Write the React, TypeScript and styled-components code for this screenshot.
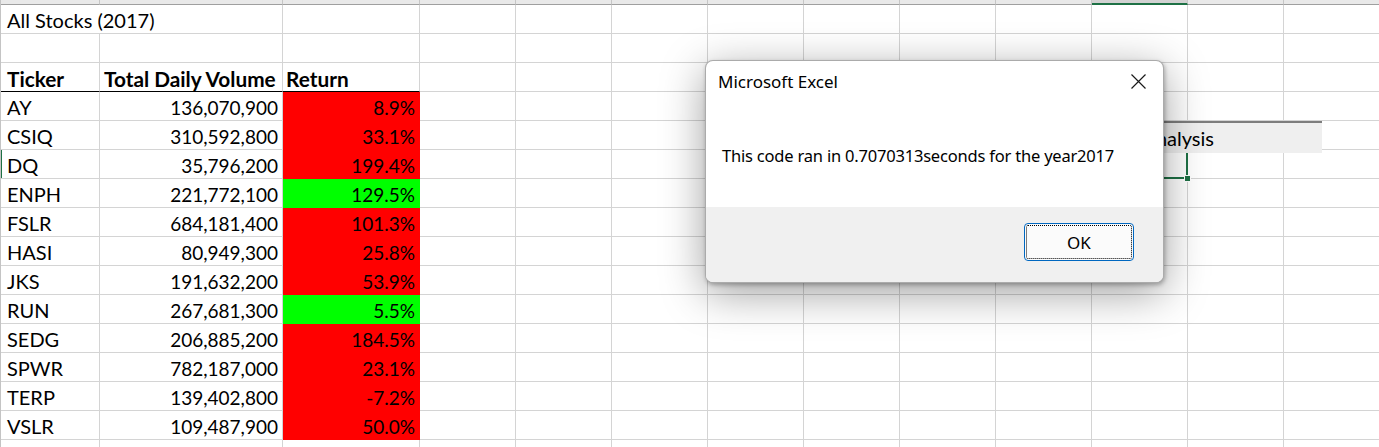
import React from 'react';
import styled, { createGlobalStyle, css } from 'styled-components';

const GlobalStyle = createGlobalStyle`
  html, body { margin: 0; padding: 0; background: #fff; overflow: hidden; }
  #root { width: 1379px; height: 447px; }
  *, *::before, *::after { box-sizing: border-box; }
`;

const COLS = '99px 183px 137px repeat(10, 96px)';
const GRID = '#d4d4d4';
const GREEN_SEL = '#1e7145';

type Fill = 'red' | 'green';
const FILLS: Record<Fill, string> = { red: '#ff0000', green: '#00ff00' };

const Screen = styled.div`
  position: relative;
  width: 1379px;
  height: 447px;
  overflow: hidden;
  background: #fff;
  font-family: Lato, 'Liberation Sans', sans-serif;
  color: #000;
`;

const Sheet = styled.div`
  display: flex;
  flex-direction: column;
  width: max-content;
  border-left: 1px solid #c4c4c4;
`;

const HeaderStrip = styled.div`
  display: grid;
  grid-template-columns: ${COLS};
  height: 5px;
`;

const ColHead = styled.div<{ $active?: boolean }>`
  background: #e9e9e9;
  border-right: 1px solid #c6c6c6;
  border-bottom: 1px solid #9f9f9f;
  ${(p) =>
    p.$active &&
    css`
      background: #d2d2d2;
      border-bottom: 2px solid ${GREEN_SEL};
    `}
`;

const Row = styled.div`
  display: grid;
  grid-template-columns: ${COLS};
  height: 29px;
`;

const Cell = styled.div<{
  $fill?: Fill;
  $right?: boolean;
  $bold?: boolean;
  $span?: number;
  $edge?: boolean;
  $selected?: boolean;
  $marked?: boolean;
}>`
  position: relative;
  height: 29px;
  display: flex;
  align-items: flex-end;
  justify-content: ${(p) => (p.$right ? 'flex-end' : 'flex-start')};
  padding: 0 4px 1px ${(p) => (p.$right ? '4px' : '6px')};
  font-size: ${(p) => (p.$right ? '19px' : p.$bold ? '20.8px' : '20px')};
  line-height: 23px;
  font-weight: ${(p) => (p.$bold ? 700 : 400)};
  white-space: nowrap;
  background: ${(p) => (p.$fill ? FILLS[p.$fill] : '#fff')};
  border-right: 1px solid ${(p) => (p.$fill ? FILLS[p.$fill] : GRID)};
  border-bottom: 1px solid
    ${(p) => (p.$edge ? '#000' : p.$fill ? FILLS[p.$fill] : GRID)};
  ${(p) => p.$span && css`grid-column: span ${p.$span};`}
  ${(p) => p.$marked && css`box-shadow: inset 1px 0 0 ${GREEN_SEL};`}
  ${(p) =>
    p.$selected &&
    css`
      &::after {
        content: '';
        position: absolute;
        top: -2px;
        left: -2px;
        right: -1px;
        bottom: -1px;
        border: 2px solid ${GREEN_SEL};
        pointer-events: none;
      }
      &::before {
        content: '';
        position: absolute;
        right: -4px;
        bottom: -4px;
        width: 7px;
        height: 7px;
        background: ${GREEN_SEL};
        border: 1px solid #fff;
        z-index: 1;
      }
    `}
`;

const ShapeButton = styled.div`
  position: absolute;
  left: 1000px;
  top: 121px;
  width: 322px;
  height: 32px;
  border-top: 2px solid #7d7d7d;
  background: #efefef;
  display: flex;
  justify-content: flex-end;
  align-items: flex-start;
  padding: 4px 108px 0 0;
  font-size: 20px;
  line-height: 23px;
  white-space: nowrap;
  overflow: hidden;
  z-index: 1;
`;

const Dialog = styled.div`
  position: absolute;
  left: 705px;
  top: 60px;
  width: 459px;
  height: 223px;
  border: 1px solid rgba(0, 0, 0, 0.33);
  border-radius: 8px;
  background: #fff;
  overflow: hidden;
  display: flex;
  flex-direction: column;
  box-shadow: 1px 2px 4px rgba(0, 0, 0, 0.28), 0 10px 44px rgba(0, 0, 0, 0.38);
  font-family: 'Noto Sans', 'Open Sans', sans-serif;
  color: #000;
  z-index: 2;
`;

const TitleBar = styled.div`
  height: 40px;
  flex: none;
  display: flex;
  justify-content: space-between;
  align-items: flex-start;
  padding: 9px 17px 0 12px;
`;

const Title = styled.div`
  font-size: 17px;
  line-height: 24px;
`;

const CloseIcon = styled.svg`
  margin-top: 4px;
  width: 15px;
  height: 15px;
`;

const Body = styled.div`
  height: 106px;
  flex: none;
  padding: 43px 0 0 16px;
  font-size: 16.5px;
  letter-spacing: -0.2px;
  line-height: 24px;
  white-space: nowrap;
`;

const Footer = styled.div`
  flex: 1;
  background: #f0f0f0;
  display: flex;
  justify-content: flex-end;
  align-items: flex-start;
  padding: 16px 29px 0 0;
`;

const OkButton = styled.button`
  width: 110px;
  height: 38px;
  border: 1px solid #0067c0;
  border-radius: 4px;
  background: #fbfbfb;
  outline: 1px dotted #000;
  outline-offset: -3px;
  font-family: 'Noto Sans', 'Open Sans', sans-serif;
  font-size: 17px;
  color: #000;
  padding: 0;
`;

const data: [string, string, string, Fill][] = [
  ['AY', '136,070,900', '8.9%', 'red'],
  ['CSIQ', '310,592,800', '33.1%', 'red'],
  ['DQ', '35,796,200', '199.4%', 'red'],
  ['ENPH', '221,772,100', '129.5%', 'green'],
  ['FSLR', '684,181,400', '101.3%', 'red'],
  ['HASI', '80,949,300', '25.8%', 'red'],
  ['JKS', '191,632,200', '53.9%', 'red'],
  ['RUN', '267,681,300', '5.5%', 'green'],
  ['SEDG', '206,885,200', '184.5%', 'red'],
  ['SPWR', '782,187,000', '23.1%', 'red'],
  ['TERP', '139,402,800', '-7.2%', 'red'],
  ['VSLR', '109,487,900', '50.0%', 'red'],
];

const EXTRA = 10; // columns D..M
const SEL_COL = 7; // index within extra columns (column K)
const SEL_ROW = 2; // DQ

const blanks = (count: number, selected = false) =>
  Array.from({ length: count }, (_, i) => (
    <Cell key={`b${i}`} $selected={selected && i === SEL_COL} />
  ));

export default function App() {
  return (
    <Screen>
      <GlobalStyle />
      <Sheet>
        <HeaderStrip>
          {Array.from({ length: 13 }, (_, i) => (
            <ColHead key={i} $active={i === 3 + SEL_COL} />
          ))}
        </HeaderStrip>
        <Row>
          <Cell $span={2}>All Stocks (2017)</Cell>
          <Cell />
          {blanks(EXTRA)}
        </Row>
        <Row>
          <Cell />
          <Cell />
          <Cell />
          {blanks(EXTRA)}
        </Row>
        <Row>
          <Cell $bold $edge>
            Ticker
          </Cell>
          <Cell $bold $edge style={{ paddingLeft: 4 }}>
            Total Daily Volume
          </Cell>
          <Cell $bold $edge style={{ paddingLeft: 3 }}>
            Return
          </Cell>
          {blanks(EXTRA)}
        </Row>
        {data.map(([ticker, vol, ret, fill], i) => (
          <Row key={ticker}>
            <Cell $marked={i === SEL_ROW}>{ticker}</Cell>
            <Cell $right>{vol}</Cell>
            <Cell $right $fill={fill}>
              {ret}
            </Cell>
            {blanks(EXTRA, i === SEL_ROW)}
          </Row>
        ))}
        <Row>
          <Cell />
          <Cell />
          <Cell />
          {blanks(EXTRA)}
        </Row>
      </Sheet>

      <ShapeButton>Analysis</ShapeButton>

      <Dialog>
        <TitleBar>
          <Title>Microsoft Excel</Title>
          <CloseIcon viewBox="0 0 15 15">
            <path d="M0.5 0.5 L14.5 14.5 M14.5 0.5 L0.5 14.5" stroke="#1a1a1a" strokeWidth="1.2" fill="none" />
          </CloseIcon>
        </TitleBar>
        <Body>This code ran in 0.7070313seconds for the year2017</Body>
        <Footer>
          <OkButton>OK</OkButton>
        </Footer>
      </Dialog>
    </Screen>
  );
}
